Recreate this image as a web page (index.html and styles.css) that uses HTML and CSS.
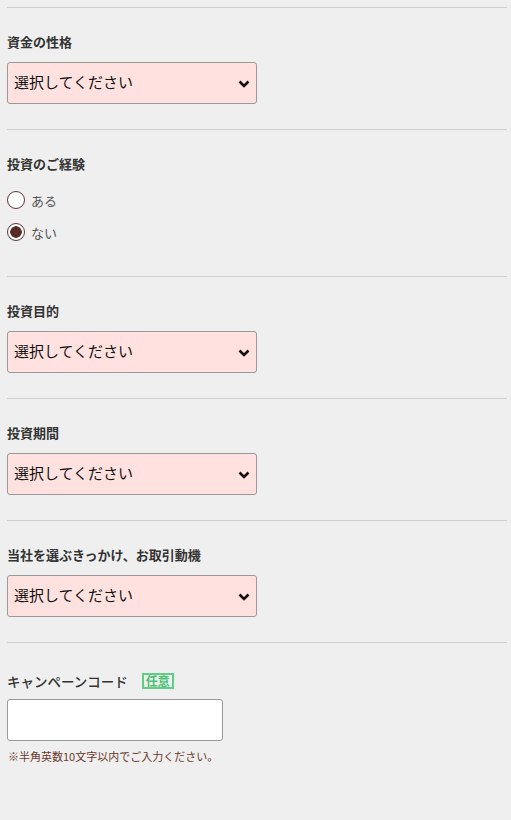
FILE: index.html
```html
<!DOCTYPE html>
<html lang="ja">
<head>
    <meta charset="UTF-8">
    <meta name="viewport" content="width=device-width, initial-scale=1.0">
    <title>お客様情報</title>
    <link rel="stylesheet" href="styles.css">
</head>
<body>
    <div class="form-wrap">
        <!-- 資金の性格 -->
        <div class="form-row">
            <p class="row-label">資金の性格</p>
            <div class="select-box">
                <select name="fund_type">
                    <option>選択してください</option>
                </select>
                <svg class="chevron" width="12" height="8" viewBox="0 0 12 8"><path d="M1.5 1.5 L6 6 L10.5 1.5" fill="none" stroke="#111" stroke-width="2.6"/></svg>
            </div>
        </div>

        <!-- 投資のご経験 -->
        <div class="form-row">
            <p class="row-label">投資のご経験</p>
            <div class="radio-list">
                <label class="radio-item"><input type="radio" name="experience" value="1"><span>ある</span></label>
                <label class="radio-item"><input type="radio" name="experience" value="0" checked><span>ない</span></label>
            </div>
        </div>

        <!-- 投資目的 -->
        <div class="form-row">
            <p class="row-label">投資目的</p>
            <div class="select-box">
                <select name="purpose">
                    <option>選択してください</option>
                </select>
                <svg class="chevron" width="12" height="8" viewBox="0 0 12 8"><path d="M1.5 1.5 L6 6 L10.5 1.5" fill="none" stroke="#111" stroke-width="2.6"/></svg>
            </div>
        </div>

        <!-- 投資期間 -->
        <div class="form-row">
            <p class="row-label">投資期間</p>
            <div class="select-box">
                <select name="period">
                    <option>選択してください</option>
                </select>
                <svg class="chevron" width="12" height="8" viewBox="0 0 12 8"><path d="M1.5 1.5 L6 6 L10.5 1.5" fill="none" stroke="#111" stroke-width="2.6"/></svg>
            </div>
        </div>

        <!-- 取引動機 -->
        <div class="form-row">
            <p class="row-label">当社を選ぶきっかけ、お取引動機</p>
            <div class="select-box">
                <select name="motive">
                    <option>選択してください</option>
                </select>
                <svg class="chevron" width="12" height="8" viewBox="0 0 12 8"><path d="M1.5 1.5 L6 6 L10.5 1.5" fill="none" stroke="#111" stroke-width="2.6"/></svg>
            </div>
        </div>

        <!-- キャンペーンコード -->
        <div class="form-row campaign">
            <p class="row-label plain">キャンペーンコード<span class="optional">任意</span></p>
            <input type="text" class="code-input" name="campaign_code" maxlength="10">
            <p class="note">※半角英数10文字以内でご入力ください。</p>
        </div>
    </div>
</body>
</html>
```

FILE: styles.css
```css
body {
    margin: 0;
    background-color: #efefef;
    font-family: "Noto Sans CJK JP", "Noto Sans", sans-serif;
    color: #333;
}
.form-wrap {
    width: 500px;
    padding: 7px 0 0 7px;
}
.form-row {
    border-top: 1px solid #cfcfcf;
    padding: 24px 0 25px;
}
.form-row.campaign {
    padding-top: 28px;
}
.row-label {
    margin: 0 0 10px;
    font-size: 13px;
    line-height: 20px;
    font-weight: bold;
    color: #333;
}
.row-label.plain {
    font-size: 13.5px;
    font-weight: 500;
    margin-bottom: 8px;
}
.select-box {
    position: relative;
    width: 250px;
}
.select-box select {
    -webkit-appearance: none;
    appearance: none;
    display: block;
    width: 250px;
    height: 42px;
    padding: 0 30px 3px 6px;
    background-color: #ffe2df;
    border: 1px solid #999;
    border-radius: 3px;
    font-family: inherit;
    font-size: 15px;
    color: #111;
}
.chevron {
    position: absolute;
    right: 7px;
    top: 18px;
    pointer-events: none;
}
.radio-list {
    display: flex;
    flex-direction: column;
    margin-top: 10px;
    margin-bottom: 3px;
}
.radio-item {
    display: flex;
    align-items: center;
    height: 32px;
    font-size: 13px;
    color: #555;
}
.radio-item input {
    -webkit-appearance: none;
    appearance: none;
    width: 18px;
    height: 18px;
    margin: 0 6px 0 0;
    border: 1.5px solid #5a3430;
    border-radius: 50%;
    background: #fff;
}
.radio-item input:checked {
    background: radial-gradient(circle, #5a2a26 0 5.5px, #fff 6px);
}
.optional {
    display: inline-block;
    margin-left: 14px;
    padding: 0 2px;
    border: 2px solid #5fcf85;
    font-size: 12px;
    line-height: 12px;
    font-weight: bold;
    color: #4cbf73;
    vertical-align: 1px;
}
.code-input {
    display: block;
    box-sizing: border-box;
    width: 216px;
    height: 42px;
    background: #fff;
    border: 1px solid #999;
    border-radius: 3px;
}
.note {
    margin: 7px 0 0 1px;
    font-size: 11px;
    color: #6b3a2e;
}
```
